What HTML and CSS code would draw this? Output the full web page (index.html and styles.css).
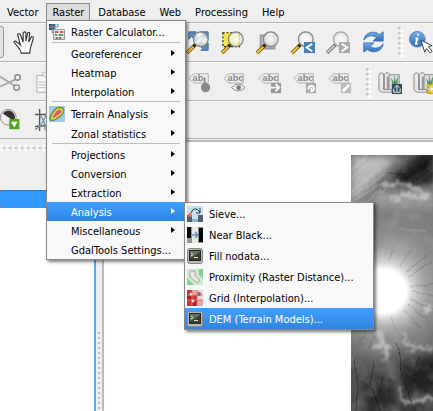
FILE: index.html
```html
<!DOCTYPE html>
<html lang="en"><head><meta charset="utf-8"><title>QGIS</title><link rel="stylesheet" href="styles.css"></head>
<body>
<svg class="defs" aria-hidden="true">
<defs>
<radialGradient id="glass"><stop offset="0" stop-color="#fff" stop-opacity=".9"/><stop offset=".7" stop-color="#eceeea" stop-opacity=".75"/><stop offset="1" stop-color="#c9ccc6" stop-opacity=".7"/></radialGradient>
<linearGradient id="blue" x2="0" y2="1"><stop offset="0" stop-color="#79aee6"/><stop offset="1" stop-color="#2f6cb8"/></linearGradient>
<symbol id="lens" viewBox="0 0 26 26"><path d="M1 25l9-9" stroke="#55451c" stroke-width="4"/><path d="M1 25l8-8" stroke="#f0bd2f" stroke-width="2.500"/><path d="M8 18l3-3" stroke="#222" stroke-width="3"/><circle cx="16" cy="10" r="8" fill="url(#glass)" stroke="#858781" stroke-width="1.300"/><path d="M11 9a5 5 0 0 1 7-4" fill="none" stroke="#fff"/></symbol>
<symbol id="lensgray" viewBox="0 0 26 26"><path d="M1 25l9-9" stroke="#777" stroke-width="4"/><path d="M1 25l8-8" stroke="#ccc" stroke-width="2"/><circle cx="16" cy="10" r="8" fill="url(#glass)" stroke="#a5a5a2" stroke-width="1.300"/></symbol>
<symbol id="label" viewBox="0 0 26 26"><path d="M1 8l5-5h16v10H6z" fill="#eee" stroke="#aaa"/></symbol>
<symbol id="scroll" viewBox="0 0 26 26"><path d="M10 4H23V21H10Z" fill="#ddd" stroke="#888"/><path d="M16 15l-2-8 3 5 1-8 1 8 3-7-1 10z" fill="#51965c"/><path d="M1 5q0-3 3-3t2 4v14h5V6M1 5v15q1 3 4 3h10v-3H6M7 20V4q1-3 4-2t1 4v14" fill="#e5e5e5" stroke="#888"/></symbol>
<symbol id="term" viewBox="0 0 16 16"><rect x=".5" y=".5" width="15" height="15" rx="2" fill="#b9bab5" stroke="#888"/><rect x="2.500" y="2.500" width="11" height="10" fill="#36422c" stroke="#22281c"/><path d="M3 10Q8 8 13 4v-1H3z" fill="#66735e"/><path d="M4 5l2 1.500L4 8M7 9.500h4" fill="none" stroke="#ddd"/></symbol>
</defs></svg>
<div class="app">
<nav class="menubar"><button>Vector</button><button class="open">Raster</button><button>Database</button><button>Web</button><button>Processing</button><button>Help</button></nav>
<div class="toolbar one">
<button class="tool checked" aria-label="Touch"></button>
<button class="tool" aria-label="Pan"><svg viewBox="0 0 26 26"><path d="M9 25q-1-4-4-7L1 13q1-2 3 0l4 3L5 5q1-2 3 0l3 8V3q2-2 3 0v9l2-9q2-1 2 1l-1 9 3-6q2 0 2 2l-3 10-1 6z" fill="#fff" stroke="#333" stroke-width="1.200"/></svg></button>
<span class="gap"></span>
<button class="tool" aria-label="Zoom full"><svg viewBox="0 0 26 26"><path d="M3 2h8L9 4l5 5-3 3-5-5-3 3zM24 2h-8l2 2-4 5 3 3 4-5 3 3zM24 22h-8l2-2-5-5 3-3 5 5 3-3z" fill="#5b8cc0" stroke="#34679c"/><use href="#lens"/></svg></button>
<button class="tool" aria-label="Zoom to selection"><svg viewBox="0 0 26 26"><path d="M2 3h18v15H2z" fill="#f7e545" stroke="#111" stroke-width="1.300" stroke-dasharray="2 2"/><use href="#lens"/></svg></button>
<button class="tool" aria-label="Zoom to layer"><svg viewBox="0 0 26 26"><path d="M5 6h15v14H5z" fill="#c4bac8" stroke="#a294a7" stroke-width="2"/><use href="#lens"/></svg></button>
<button class="tool" aria-label="Zoom last"><svg viewBox="0 0 26 26"><use href="#lens"/><path d="M14 13h12v12H14z" fill="#4a80b8"/><path d="M23 15l-6 4 6 4" fill="none" stroke="#fff" stroke-width="2"/></svg></button>
<button class="tool" aria-label="Zoom next"><svg viewBox="0 0 26 26"><use href="#lensgray"/><path d="M14 13h12v12H14z" fill="#aaa"/><path d="M17 15l6 4-6 4" fill="none" stroke="#fff" stroke-width="2"/></svg></button>
<button class="tool" aria-label="Refresh"><svg viewBox="0 0 26 26"><path d="M3 11C4 2 15 0 20 5l4-3v10H13l4-4C12 5 7 6 3 11z" fill="url(#blue)" stroke="#3f77b8"/><path d="M24 15c-1 9-12 11-17 6l-4 3V14h11l-4 4c5 3 10 2 14-3z" fill="url(#blue)" stroke="#3f77b8"/></svg></button>
<i class="grip"></i>
<button class="tool" aria-label="Identify"><svg viewBox="0 0 26 26"><circle cx="9" cy="10" r="8.500" fill="url(#blue)" stroke="#5684b5"/><path d="M10 4l-.5 2M7 9h2l-1.500 6h2" fill="none" stroke="#fff" stroke-width="2"/><path d="M13 11l12 6-4 1 4 5-2 2-4-5-2 4z" fill="#fff" stroke="#333"/></svg></button>
</div>
<div class="toolbar two">
<button class="tool" aria-label="Cut"><svg viewBox="0 0 26 26"><path d="M0 6l16 10M0 17L17 9" stroke="#aaa" stroke-width="2"/><circle cx="19" cy="7" r="3" fill="none" stroke="#888" stroke-width="1.500"/><circle cx="18" cy="18" r="3" fill="none" stroke="#888" stroke-width="1.500"/></svg></button>
<button class="tool" aria-label="Copy"><svg viewBox="0 0 26 26"><path d="M8 2h10v18H8z" fill="#f7f7f7" stroke="#bbb"/><path d="M2 5h8l4 4v14H2z" fill="#f7f7f7" stroke="#aaa"/><path d="M4 12h8M4 15h8M4 18h8" stroke="#bbb"/></svg></button>
<span class="gap"></span>
<button class="tool" aria-label="Pin label"><svg viewBox="0 0 26 26"><use href="#label"/><text x="5" y="11">ab</text><path d="M18 7v8" stroke="#888" stroke-width="2"/><circle cx="19" cy="18" r="5" fill="#888"/></svg></button>
<button class="tool" aria-label="Show label"><svg viewBox="0 0 26 26"><use href="#label"/><text x="5" y="11">abc</text><path d="M9 18q8-8 15 0-7 7-15 0z" fill="#eee" stroke="#888"/><circle cx="17" cy="18" r="2.500" fill="#777"/></svg></button>
<button class="tool" aria-label="Move label"><svg viewBox="0 0 26 26"><use href="#label"/><text x="5" y="11">abc</text><path d="M14 13h11v11H14z" fill="#999"/><path d="M14 18h8M19 14l4 4-4 4" fill="none" stroke="#fff" stroke-width="2"/></svg></button>
<button class="tool" aria-label="Rotate label"><svg viewBox="0 0 26 26"><use href="#label"/><text x="5" y="11">abc</text><path d="M14 13h11v11H14z" fill="#aaa"/><path d="M17 20a3 3 0 1 1 3 2v-4" fill="none" stroke="#fff" stroke-width="2"/></svg></button>
<button class="tool" aria-label="Change label"><svg viewBox="0 0 26 26"><use href="#label"/><text x="5" y="11">abc</text><path d="M14 13h11v11H14z" fill="#bbb"/><path d="M16 22l7-7" stroke="#fff" stroke-width="3"/></svg></button>
<i class="grip"></i>
<button class="tool" aria-label="Open mapset"><svg viewBox="0 0 26 26"><use href="#scroll"/><path d="M15 14h11v11H15z" fill="#315064"/><path d="M17 19v4h7v-4M20.500 22v-6M18 18l2.500-2.500L23 18" fill="none" stroke="#fff"/></svg></button>
<button class="tool" aria-label="New mapset"><svg viewBox="0 0 26 26"><use href="#scroll"/><path d="M15 14h11v11H15z" fill="#cfaa18"/><path d="M20.500 15v9M16 19.500h9M17 16l7 7M24 16l-7 7" stroke="#fff"/></svg></button>
</div>
<div class="toolbar three">
<button class="tool" aria-label="Contrast"><svg viewBox="0 0 26 26"><circle cx="9" cy="10" r="8.500" fill="#eee" stroke="#888"/><path d="M3 6a7 7 0 0 1 12 8z" fill="#333"/><path d="M10 12h11v11H10z" fill="#56a51d"/><path d="M12 15h7l-3.500 6z" fill="#fff"/></svg></button>
<button class="tool" aria-label="Grid"><svg viewBox="0 0 26 26"><path d="M5 1v24M0 7h24M0 20l24-2" stroke="#555" stroke-width="1.500"/><path d="M0 23q8-2 14-22M5 8q6 4 6 16" fill="none" stroke="#7396ac" stroke-width="1.500"/></svg></button>
</div>
<main class="work">
<aside class="dock"><div class="handle"></div><div class="layers"><div class="selected"></div></div></aside>
<div class="splitter"><i></i></div>
<section class="canvas">
<svg class="dem" viewBox="0 0 82 256" preserveAspectRatio="none" aria-label="Elevation raster">
<defs>
<linearGradient id="base" x2="0" y2="1"><stop offset="0" stop-color="#555"/><stop offset=".2" stop-color="#7b7b7b"/><stop offset=".45" stop-color="#7c7c7c"/><stop offset=".66" stop-color="#6a6a6a"/><stop offset=".83" stop-color="#505050"/><stop offset="1" stop-color="#3c3c3c"/></linearGradient>
<radialGradient id="peak" gradientUnits="userSpaceOnUse" cx="33" cy="136" r="88"><stop offset="0" stop-color="#fff"/><stop offset=".25" stop-color="#fff"/><stop offset=".33" stop-color="#e2e2e2" stop-opacity=".85"/><stop offset=".5" stop-color="#b5b5b5" stop-opacity=".6"/><stop offset=".75" stop-color="#999" stop-opacity=".3"/><stop offset="1" stop-color="#888" stop-opacity="0"/></radialGradient>
<filter id="soft" x="-30%" y="-30%" width="160%" height="160%"><feGaussianBlur stdDeviation="5"/></filter>
<filter id="rough" filterUnits="userSpaceOnUse" x="0" y="0" width="82" height="256"><feTurbulence type="fractalNoise" baseFrequency=".09" numOctaves="2" seed="4"/><feDisplacementMap in="SourceGraphic" scale="6" xChannelSelector="R" yChannelSelector="G"/><feGaussianBlur stdDeviation=".5"/></filter>
<filter id="ridge" filterUnits="userSpaceOnUse" x="0" y="0" width="82" height="256"><feTurbulence type="fractalNoise" baseFrequency=".2" numOctaves="3" seed="9"/><feDisplacementMap in="SourceGraphic" scale="10" xChannelSelector="R" yChannelSelector="G"/><feGaussianBlur stdDeviation="1.200"/></filter>
<filter id="grain" x="0" y="0" width="100%" height="100%"><feTurbulence type="fractalNoise" baseFrequency=".06" numOctaves="5" seed="8"/><feColorMatrix values="0 0 0 0 .7  0 0 0 0 .7  0 0 0 0 .7  1.8 0 0 0 -.75"/></filter>
</defs>
<path d="M0 0h82v256H0z" fill="url(#base)"/>
<g filter="url(#soft)"><path d="M0 0h50L0 50z" fill="#b8b8b8"/><path d="M42 20L82-8v36L50 32z" fill="#181818"/><path d="M20 38h62v15H30z" fill="#999"/><path d="M45 200h45v38H55z" fill="#222"/><path d="M12 225h32v35H12z" fill="#292929"/><path d="M0 200l15 60H0z" fill="#555"/></g>
<path d="M0 0h82v256H0z" filter="url(#grain)" opacity=".3"/>
<path d="M0 0h82v256H0z" fill="url(#peak)"/>
<g filter="url(#ridge)" fill="none" stroke="#e5e5e5" stroke-opacity=".5" stroke-width="4"><path d="M26 174l5 13-7 7M31 187l5 4-2 14M52 178l4 13 26 3M72 148l8 9M74 158l6-8M48 232l5 16 29-6M32 31l20-3 12 5 16 9M38 44l18-4 20 3"/></g>
<g filter="url(#rough)" fill="none" stroke="#eee" stroke-opacity=".22"><path d="M0 36l28-22M0 24l22-20M0 48l35-23M0 15L18 0M0 42l38-26M8 50l26-16M50 75h25"/></g>
<g filter="url(#rough)" fill="none" stroke="#333" stroke-opacity=".2"><path d="M56 122l24-15M59 132l23-4M58 144l24 10M52 154l18 20M49 111l13-17M38 107l5-18M40 163l5 12M61 137l21 3M55 117l20-17M56 149l21 18M24 180l-8 14M16 178l-8 12"/></g>
<g filter="url(#rough)" fill="none" stroke="#111" stroke-opacity=".4"><path d="M4 202l3 30-3 24M24 205l-5 25 9 26M46 188l4 30 13 38M80 3L58 20 38 18M78 16L60 28M68 202l-6 20 12 16M32 222l-4 18"/></g>
</svg>
</section>
</main>
</div>
<div class="menu main-menu" role="menu">
<button class="item tall"><svg viewBox="0 0 16 16"><path d="M0 0h6v6H0z" fill="#345268"/><path d="M0 3h9V0H6v9H3V0" fill="none" stroke="#7394a9"/><path d="M4.500 5.500h11v10h-11z" fill="#eee" stroke="#999"/><path d="M5 8h10M5 11h10M5 14h10" stroke="#aaa"/><path d="M6 8h3M11 8h3" stroke="#d55" stroke-width="2"/><path d="M6 11h2M10 11h4" stroke="#4aa56c" stroke-width="2"/><path d="M7 14h6" stroke="#777" stroke-width="2" stroke-dasharray="2 1"/></svg><span>Raster Calculator...</span></button>
<hr>
<button class="item sub"><span>Georeferencer</span></button><button class="item sub"><span>Heatmap</span></button><button class="item sub"><span>Interpolation</span></button>
<hr>
<button class="item tall sub"><svg viewBox="0 0 16 16"><path d="M0 0h16v16H0z" fill="#a5c9ee"/><path d="M1 14C0 9 3 7 5 4s6-4 9-2c2 3 0 7-3 9-3 1-5 5-10 3z" fill="#7fb52e" stroke="#5b9130"/><path d="M3 13c-1-3 2-5 4-8s4-2 6-1c1 2-1 4-3 5s-4 4-7 4z" fill="#e0556a" stroke="#f0df66" stroke-width="1.200"/></svg><span>Terrain Analysis</span></button><button class="item sub"><span>Zonal statistics</span></button>
<hr>
<button class="item sub"><span>Projections</span></button><button class="item sub"><span>Conversion</span></button><button class="item sub"><span>Extraction</span></button><button class="item sub active"><span>Analysis</span></button><button class="item sub"><span>Miscellaneous</span></button><button class="item"><span>GdalTools Settings...</span></button>
</div>
<div class="menu analysis-menu" role="menu">
<button class="item tall"><svg viewBox="0 0 16 16"><path d="M0 0h16v16H0z" fill="#c5e2f2"/><path d="M0 9h5v7H0zM11 9h5v7h-5z" fill="#4b5f6e"/><path d="M5 13h6v3H5z" fill="#8fb4cb"/><path d="M4 7Q7-1 13 6M13 2v5H9" fill="none" stroke="#333"/><circle cx="3" cy="9" r="2" fill="#e57566"/></svg><span>Sieve...</span></button>
<button class="item tall"><svg viewBox="0 0 16 16"><path d="M0 0h16v16H0z" fill="#8d969d"/><path d="M0 0h4v11H0zM12 1h4v14h-4z" fill="#000"/><path d="M5 0h6v16H5z" fill="#e8e8e8"/><path d="M5 8h5M8 5l3 3-3 3" fill="none" stroke="#6b8fb2" stroke-width="1.500"/></svg><span>Near Black...</span></button>
<button class="item tall"><svg><use href="#term"/></svg><span>Fill nodata...</span></button>
<button class="item tall"><svg viewBox="0 0 16 16"><path d="M0 0h16v16H0z" fill="#8ccb90"/><path d="M0 0h12v6l4 4v6H7L0 9z" fill="#cdeacc"/><path d="M3 2h5v5l5 4-3 3-7-6z" fill="#e7e7e7" stroke="#aaa"/></svg><span>Proximity (Raster Distance)...</span></button>
<button class="item tall"><svg viewBox="0 0 16 16"><path d="M0 0h16v16H0z" fill="#e9a4a4"/><path d="M0 0h5v5H0zM5 5h5v5H5zM0 10h5v6H0z" fill="#c83434"/><path d="M0 5h5v5H0zM5 10h5v6H5z" fill="#b51b1b"/><path d="M10 0h6v10h-6z" fill="#f3d3d3"/><path d="M5 0v16M10 0v16M0 5h16M0 10h16" stroke="#d77"/><circle cx="12" cy="4" r="2" fill="#777"/><circle cx="4" cy="4" r="1.500" fill="#ddd"/><circle cx="6" cy="11" r="1.500" fill="#ddd"/></svg><span>Grid (Interpolation)...</span></button>
<button class="item tall active"><svg><use href="#term"/></svg><span>DEM (Terrain Models)...</span></button>
</div>
</body></html>
```
FILE: styles.css
```css
* { box-sizing: border-box; }
html, body { height: 100%; margin: 0; }
body { overflow: hidden; background: #efefef; color: #000; font: 11px/16px "DejaVu Sans Condensed", "Noto Sans", sans-serif; }
button { font: inherit; color: inherit; border: 0; background: none; padding: 0; margin: 0; }
.defs { position: absolute; width: 0; height: 0; }
.app { display: flex; flex-direction: column; height: 100%; }
.menubar { display: flex; height: 23px; padding-top: 3px; border-bottom: 1px solid #b5b5b5; flex: none; }
.menubar button { height: 18px; padding: 2px 7px 0; white-space: nowrap; }
.menubar .open { background: #ddd; border: 1px solid #8d8d8d; padding: 1px 5px 0; margin: 0 1px; }
.toolbar { display: flex; align-items: center; height: 39px; flex: none; border-bottom: 1px solid #b5b5b5; box-shadow: inset 0 1px #fafafa; overflow: hidden; }
.tool { width: 24px; height: 24px; margin-right: 11px; flex: none; }
.tool svg { display: block; width: 24px; height: 24px; }
.tool text { font: bold 10px "Liberation Sans", sans-serif; fill: #888; }
.one .checked { width: 14px; height: 32px; margin-left: -10px; margin-right: 9px; border: 1px solid #999; border-radius: 3px; background: #e2e2e2; }
.one .gap { width: 138px; flex: none; }
.two { padding-top: 3px; }
.two .gap { width: 118px; flex: none; }
.grip { width: 6px; height: 30px; margin: 0 6px 0 3px; flex: none; background: radial-gradient(circle at 1px 1px, #c4c4c4 1px, transparent 2px) 0 0 / 6px 5px, radial-gradient(circle at 4px 4px, #fff 1px, transparent 2px) 0 0 / 6px 5px; }
.one .grip { margin: 0 5px 0 2px; }
.three { height: 38px; }
.work { flex: 1; display: flex; min-height: 0; padding-top: 1px; }
.dock { width: 96px; flex: none; display: flex; flex-direction: column; }
.handle { height: 6px; margin: 5px 0 39px; background: radial-gradient(circle at 2px 1px, #fff 1px, transparent 2px) 0 0 / 6px 4px, radial-gradient(circle at 4px 3px, #ccc 1px, transparent 2px) 0 0 / 6px 4px; }
.layers { flex: 1; background: #fff; border-top: 1px solid #2878cc; border-right: 2px solid #5ba6f2; }
.selected { height: 17px; background: #3399ff; border: dotted #b87030; border-width: 1px 0; }
.splitter { width: 6px; flex: none; padding: 192px 2px 0; display: flex; }
.splitter i { width: 2px; background: repeating-linear-gradient(#bbb 0 2px, #f7f7f7 2px 3px, #efefef 3px 5px); }
.canvas { flex: 1; min-width: 0; background: #fff; border-left: 2px solid #bbb; border-top: 2px solid #bbb; padding-top: 13px; display: flex; justify-content: flex-end; }
.dem { width: 25%; height: 100%; }
.menu { position: absolute; display: flex; flex-direction: column; background: #f8f8f8; border: 1px solid #888; box-shadow: 2px 2px 3px rgba(0,0,0,.5); }
.main-menu { left: 46px; top: 20px; width: 140px; }
.analysis-menu { left: 184px; top: 202px; width: 190px; }
.item { position: relative; display: grid; grid-template-columns: 16px 1fr; column-gap: 6px; align-items: center; height: 19px; padding-left: 2px; text-align: left; white-space: nowrap; flex: none; }
.item span { grid-column: 2; padding-top: 2px; }
.item svg { grid-row: 1; width: 16px; height: 16px; display: block; }
.tall { height: 21px; }
.sub::after { content: ""; position: absolute; right: 10px; top: 6px; border: 3px solid transparent; border-left: 4px solid currentColor; border-right: 0; }
.active { background: linear-gradient(#42a0ff, #2d86e0); color: #fff; }
hr { height: 1px; margin: 0 5px 1px; border: 0; background: #bbb; flex: none; }
```
